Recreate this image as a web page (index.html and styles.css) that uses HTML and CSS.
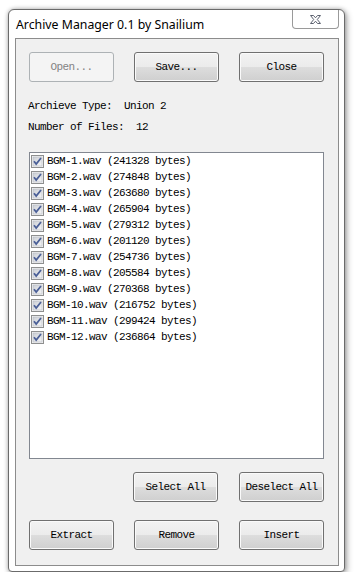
FILE: index.html
```html
<!DOCTYPE html>
<html lang="en">
<head>
    <meta charset="UTF-8">
    <meta name="viewport" content="width=device-width, initial-scale=1.0">
    <title>Archive Manager</title>
    <link rel="stylesheet" href="styles.css">
</head>
<body>
    <div class="window">
        <div class="titlebar">
            <span class="title">Archive Manager 0.1 by Snailium</span>
            <div class="close-box">
                <svg width="11" height="9" viewBox="0 0 11 9">
                    <path d="M0.5 0.5 H3.5 L5.5 2.8 L7.5 0.5 H10.5 L7.3 4.5 L10.5 8.5 H7.5 L5.5 6.2 L3.5 8.5 H0.5 L3.7 4.5 Z" fill="#fff" stroke="#5d6270" stroke-width="1" stroke-linejoin="round"/>
                </svg>
            </div>
        </div>

        <div class="client">
            <div class="btn-row">
                <button class="btn" disabled>Open...</button>
                <button class="btn">Save...</button>
                <button class="btn">Close</button>
            </div>

            <div class="info">
                <div class="info-line">Archieve Type:  Union 2</div>
                <div class="info-line">Number of Files:  12</div>
            </div>

            <div class="file-list" id="fileList"></div>

            <div class="btn-row select-row">
                <button class="btn" id="selectAll">Select All</button>
                <button class="btn" id="deselectAll">Deselect All</button>
            </div>

            <div class="btn-row action-row">
                <button class="btn">Extract</button>
                <button class="btn">Remove</button>
                <button class="btn">Insert</button>
            </div>
        </div>
    </div>

    <svg width="0" height="0" class="defs">
        <defs>
            <linearGradient id="cbg" x1="0" y1="0" x2="1" y2="1">
                <stop offset="0" stop-color="#cbcfd5"/>
                <stop offset="1" stop-color="#f6f6f6"/>
            </linearGradient>
        </defs>
    </svg>

    <script>
        const files = [
            ['BGM-1.wav', 241328], ['BGM-2.wav', 274848], ['BGM-3.wav', 263680],
            ['BGM-4.wav', 265904], ['BGM-5.wav', 279312], ['BGM-6.wav', 201120],
            ['BGM-7.wav', 254736], ['BGM-8.wav', 205584], ['BGM-9.wav', 270368],
            ['BGM-10.wav', 216752], ['BGM-11.wav', 299424], ['BGM-12.wav', 236864]
        ];
        const list = document.getElementById('fileList');
        const checkSvg = '<svg class="check" width="13" height="13" viewBox="0 0 13 13">' +
            '<rect x="0.5" y="0.5" width="12" height="12" fill="#f4f4f4" stroke="#8e8f8f"/>' +
            '<rect x="2" y="2" width="9" height="9" fill="url(#cbg)" stroke="#b4b9c2" stroke-width="0.6"/>' +
            '<path d="M3 6.2 L5.2 9 L10 3" fill="none" stroke="#4a5f97" stroke-width="1.8"/></svg>';

        files.forEach(f => {
            const row = document.createElement('div');
            row.className = 'file-row checked';
            row.innerHTML = checkSvg + '<span>' + f[0] + ' (' + f[1] + ' bytes)</span>';
            row.addEventListener('click', () => row.classList.toggle('checked'));
            list.appendChild(row);
        });

        // Select / deselect everything
        document.getElementById('selectAll').addEventListener('click', () => {
            list.querySelectorAll('.file-row').forEach(r => r.classList.add('checked'));
        });
        document.getElementById('deselectAll').addEventListener('click', () => {
            list.querySelectorAll('.file-row').forEach(r => r.classList.remove('checked'));
        });
    </script>
</body>
</html>
```

FILE: styles.css
```css
body {
    margin: 0;
    background-color: #fff;
    font-family: "Liberation Mono", "DejaVu Sans Mono", monospace;
    font-size: 11px;
    letter-spacing: -0.6px;
}
.defs {
    position: absolute;
}
.window {
    margin: 9px 0 0 8px;
    width: 324px;
    border: 1px solid #6b6b6b;
    border-radius: 6px 6px 4px 4px;
    background-color: #fff;
    padding: 0 5px 5px 6px;
    box-shadow: 0 0 4px rgba(0, 0, 0, 0.25), 2px 2px 6px rgba(0, 0, 0, 0.3);
}
.titlebar {
    display: flex;
    justify-content: space-between;
    align-items: flex-start;
    height: 28px;
}
.title {
    align-self: center;
    padding-left: 1px;
    padding-top: 1px;
    font-family: "Noto Sans", "Open Sans", sans-serif;
    font-size: 12.3px;
    letter-spacing: 0;
    color: #000;
}
.close-box {
    width: 45px;
    height: 18px;
    border: 1px solid #9a9a9a;
    border-top: none;
    border-radius: 0 0 4px 4px;
    display: flex;
    align-items: center;
    justify-content: center;
}
.close-box svg {
    display: block;
    margin-top: 1px;
    margin-left: -1px;
}
.client {
    border: 1px solid #8c8c8c;
    background-color: #f0f0f0;
    padding: 13px 14px 15px 13px;
}
.btn-row {
    display: flex;
    justify-content: space-between;
}
.btn {
    width: 85px;
    height: 30px;
    padding: 0;
    border: 1px solid #707070;
    border-radius: 3px;
    background: linear-gradient(#f2f2f2 0%, #ebebeb 50%, #dddddd 51%, #cfcfcf 100%);
    box-shadow: inset 0 0 0 1px #fafafa;
    font-family: inherit;
    font-size: inherit;
    letter-spacing: inherit;
    color: #000;
    cursor: pointer;
}
.btn:disabled {
    border-color: #adb2b5;
    background: #f4f4f4;
    box-shadow: none;
    color: #838383;
    cursor: default;
}
.info {
    margin-top: 14px;
    margin-left: -1px;
    line-height: 21px;
}
.info-line {
    white-space: pre;
}
.file-list {
    margin-top: 14px;
    height: 305px;
    border: 1px solid #828790;
    background-color: #fff;
}
.file-row {
    display: flex;
    align-items: center;
    height: 16px;
    padding-left: 1px;
    white-space: pre;
}
.file-row span {
    margin-left: 3px;
}
.file-row .check {
    display: block;
}
.file-row:not(.checked) .check path {
    display: none;
}
.select-row {
    justify-content: flex-end;
    gap: 21px;
    margin-top: 13px;
}
.action-row {
    margin-top: 18px;
}
```
